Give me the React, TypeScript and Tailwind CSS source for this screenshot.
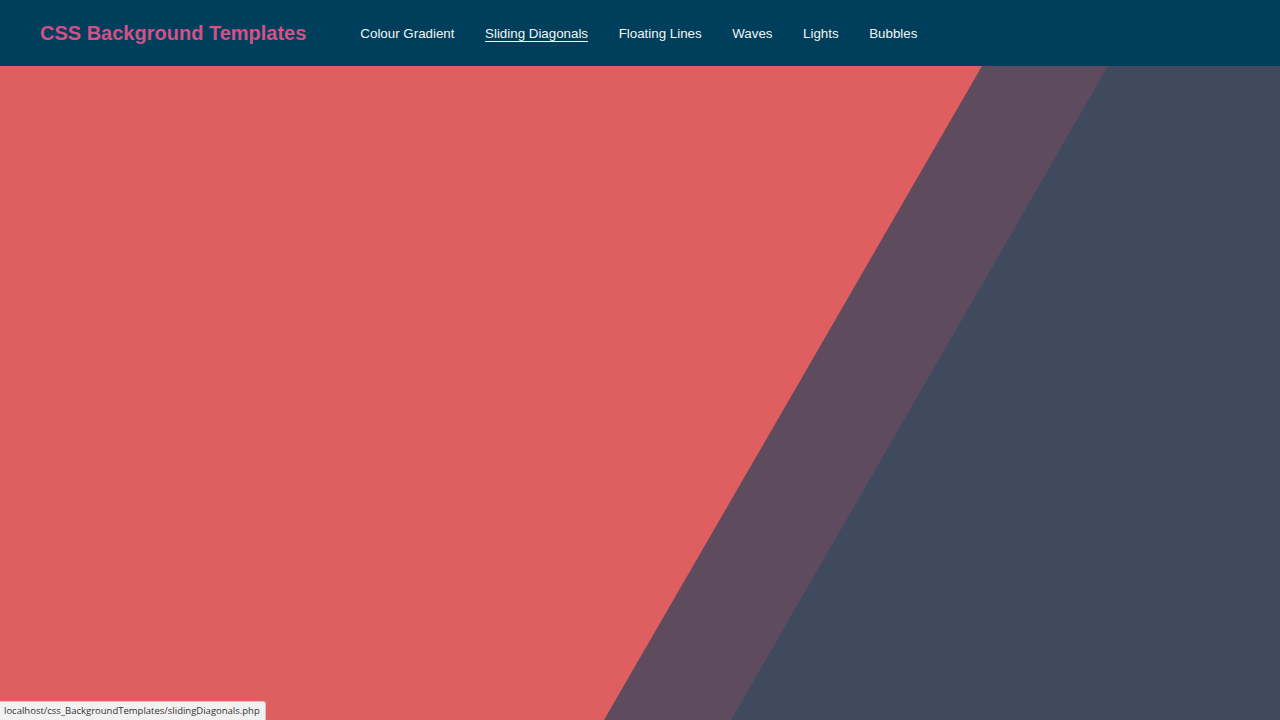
import React from "react";

export default function App() {
  const links = ["Colour Gradient", "Sliding Diagonals", "Floating Lines", "Waves", "Lights", "Bubbles"];
  return (
    <div
      className="relative flex h-screen w-full flex-col overflow-hidden"
      style={{ fontFamily: '"Liberation Sans", Arial, sans-serif' }}
    >
      <header className="flex h-[66px] shrink-0 items-center bg-[#003f5c] pl-10">
        <h1 className="text-[20px] font-bold leading-none text-[#d45087]">CSS Background Templates</h1>
        <nav className="ml-[54px] mt-[2px] flex items-center gap-[30.6px]">
          {links.map((l) => (
            <a
              key={l}
              href="#"
              className={
                "text-[13.33px] leading-none text-[#f4f4f4] " +
                (l === "Sliding Diagonals" ? "underline underline-offset-[3px]" : "no-underline")
              }
            >
              {l}
            </a>
          ))}
        </nav>
      </header>
      <main className="relative flex-1 bg-[#df5e5f]">
        <svg
          className="absolute inset-0 h-full w-full"
          viewBox="0 0 1280 654"
          preserveAspectRatio="none"
        >
          <polygon points="982,0 1280,0 1280,654 604,654" fill="#5f4b5e" />
          <polygon points="1108,0 1280,0 1280,654 731,654" fill="#404a5e" />
        </svg>
      </main>
      <div
        className="absolute bottom-0 left-0 flex h-[19px] items-center rounded-tr-[3px] border-t border-r border-[#c8c8c8] bg-[#f1f1f1] pl-[4px] pr-[5px] text-[9.5px] text-[#333]"
        style={{ fontFamily: '"Open Sans", "Noto Sans", sans-serif' }}
      >
        localhost/css_BackgroundTemplates/slidingDiagonals.php
      </div>
    </div>
  );
}
